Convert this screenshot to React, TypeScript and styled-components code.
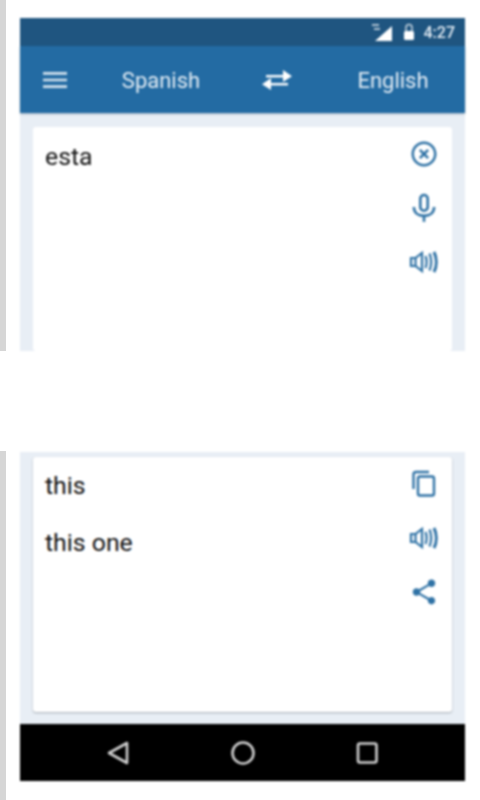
import React from 'react';
import styled, { createGlobalStyle } from 'styled-components';
import { MdMenu, MdHighlightOff, MdShare } from 'react-icons/md';

const GlobalStyle = createGlobalStyle`
  html, body {
    margin: 0;
    padding: 0;
    background: #fff;
    font-family: Roboto, "Liberation Sans", sans-serif;
  }
`;

function Speaker() {
  return (
    <svg width="30" height="24" viewBox="0 0 30 24" fill="none" stroke="currentColor" strokeWidth="2.2">
      <path d="M2 8h4.500v8H2z" />
      <path d="M6.500 8L13 3v18l-6.500-5" />
      <path d="M16.500 6c1.500 4 1.500 8 0 12" />
      <path d="M20.500 3.500c2 5 2 12 0 17" />
      <path d="M25 2c3 6 3 14 0 20" strokeWidth="3" />
    </svg>
  );
}

function MicIcon() {
  return (
    <svg width="24" height="30" viewBox="0 0 26 32" fill="none" stroke="currentColor" strokeWidth="2.800">
      <rect x="9" y="2" width="8" height="17" rx="4" />
      <path d="M2 15c0 6 4.500 9.500 11 9.500S24 21 24 15" />
      <path d="M13 24v7" />
    </svg>
  );
}

function CopyIcon() {
  return (
    <svg width="26" height="28" viewBox="0 0 26 28" fill="none" stroke="currentColor" strokeWidth="2.400">
      <path d="M2.500 19V4.500C2.500 3 3.500 2 5 2h13" />
      <rect x="7" y="6.500" width="16" height="19" rx="2" />
    </svg>
  );
}

function SwapArrows() {
  return (
    <svg width="32" height="24" viewBox="0 0 32 24" fill="currentColor">
      <path d="M5 7h18v2.400H5z" />
      <path d="M22 2l9 6.200L22 14z" />
      <path d="M9 15h18v2.400H9z" />
      <path d="M10 10L1 16.200 10 22z" />
    </svg>
  );
}

function SignalIcon() {
  return (
    <svg width="23" height="19" viewBox="0 0 23 19" fill="currentColor">
      <path d="M21 3v15H4z" />
      <path d="M1 1h7v2H1zM3 5h6v2H3z" opacity="0.65" />
    </svg>
  );
}

function LockIcon() {
  return (
    <svg width="12" height="18" viewBox="0 0 12 18" fill="none">
      <path d="M3 8V4.500a3 3 0 0 1 6 0V8" stroke="currentColor" strokeWidth="1.500" opacity="0.75" />
      <rect x="1" y="8" width="10" height="9" rx="1.500" fill="currentColor" />
    </svg>
  );
}

function BackIcon() {
  return (
    <svg width="22" height="24" viewBox="0 0 22 24" fill="none" stroke="currentColor" strokeWidth="2.600" strokeLinejoin="round">
      <path d="M20 2v20L2 12z" />
    </svg>
  );
}

function HomeIcon() {
  return (
    <svg width="26" height="24" viewBox="0 0 26 24" fill="none" stroke="currentColor" strokeWidth="2.600">
      <circle cx="13" cy="12" r="10.500" />
    </svg>
  );
}

function RecentsIcon() {
  return (
    <svg width="22" height="24" viewBox="0 0 22 24" fill="none" stroke="currentColor" strokeWidth="2.600">
      <rect x="2" y="2.500" width="18.500" height="19" rx="2" />
    </svg>
  );
}

export default function App() {
  return (
    <>
      <GlobalStyle />
      <Page>
        <Edge>
          <EdgeSegment $height={351} />
          <EdgeGap />
          <EdgeSegment $height={349} />
        </Edge>
        <Screen>
          <StatusBar>
            <SignalIcon />
            <LockIcon />
            <Clock>4:27</Clock>
          </StatusBar>
          <Toolbar>
            <MenuButton><MdMenu size={32} /></MenuButton>
            <Language>Spanish</Language>
            <SwapButton><SwapArrows /></SwapButton>
            <Language>English</Language>
          </Toolbar>
          <Panel $height={238} $top={14}>
            <Card $open>
              <Lines $top={16}>
                <Line>esta</Line>
              </Lines>
              <Actions>
                <IconSlot><MdHighlightOff size={36} /></IconSlot>
                <IconSlot><MicIcon /></IconSlot>
                <IconSlot><Speaker /></IconSlot>
              </Actions>
            </Card>
          </Panel>
          <Break />
          <Panel $height={272} $top={5}>
            <Card>
              <Lines $top={15}>
                <Line>this</Line>
                <Line>this one</Line>
              </Lines>
              <Actions>
                <IconSlot><CopyIcon /></IconSlot>
                <IconSlot><Speaker /></IconSlot>
                <IconSlot><MdShare size={30} /></IconSlot>
              </Actions>
            </Card>
          </Panel>
          <NavBar>
            <BackIcon />
            <HomeIcon />
            <RecentsIcon />
          </NavBar>
        </Screen>
      </Page>
    </>
  );
}

const Page = styled.div`
  display: flex;
  width: 480px;
  height: 800px;
  overflow: hidden;
  background: #fff;
`;

const Edge = styled.div`
  display: flex;
  flex-direction: column;
  width: 6px;
  flex-shrink: 0;
`;

const EdgeSegment = styled.div<{ $height: number }>`
  height: ${p => p.$height}px;
  background: #d6d6d6;
`;

const EdgeGap = styled.div`
  height: 100px;
`;

const Screen = styled.div`
  display: flex;
  flex-direction: column;
  width: 445px;
  margin-left: 14px;
  padding-top: 18px;
  filter: blur(0.8px);
`;

const StatusBar = styled.div`
  display: flex;
  align-items: center;
  justify-content: flex-end;
  gap: 9px;
  height: 28px;
  padding-right: 10px;
  background: #1f5580;
  color: #fff;
`;

const Clock = styled.span`
  font-size: 16px;
  font-weight: 500;
  color: #e6eef5;
`;

const Toolbar = styled.div`
  display: flex;
  align-items: center;
  height: 67px;
  background: #236ba3;
  color: #e4edf5;
  box-shadow: 0 1px 2px rgba(30, 60, 90, 0.35);
  position: relative;
`;

const MenuButton = styled.div`
  display: flex;
  justify-content: center;
  width: 70px;
  color: #d4e3ee;
`;

const Language = styled.div`
  width: 142px;
  padding-top: 2px;
  font-size: 22px;
  text-align: center;
`;

const SwapButton = styled.div`
  display: flex;
  justify-content: center;
  width: 90px;
  color: #fff;
`;

const Panel = styled.div<{ $height: number; $top: number }>`
  height: ${p => p.$height}px;
  padding: ${p => p.$top}px 13px 0;
  background: #e8eef5;
  box-sizing: border-box;
  display: flex;
  flex-direction: column;
`;

const Card = styled.div<{ $open?: boolean }>`
  display: flex;
  justify-content: space-between;
  flex: 1;
  margin-bottom: ${p => (p.$open ? 0 : 12)}px;
  padding: 0 13px 0 12px;
  background: #fff;
  border-radius: 3px;
  box-shadow: ${p => (p.$open ? 'none' : '0 1px 2px rgba(60, 70, 80, 0.4)')};
`;

const Lines = styled.div<{ $top: number }>`
  display: flex;
  flex-direction: column;
  gap: 29px;
  padding-top: ${p => p.$top}px;
`;

const Line = styled.div`
  font-size: 24.800px;
  line-height: 28px;
  color: #111;
`;

const Actions = styled.div`
  display: flex;
  flex-direction: column;
  width: 30px;
`;

const IconSlot = styled.div`
  display: flex;
  align-items: center;
  justify-content: center;
  height: 54px;
  color: #2f72a5;
`;

const Break = styled.div`
  height: 101px;
  background: #fff;
`;

const NavBar = styled.div`
  display: flex;
  align-items: center;
  justify-content: space-between;
  height: 57px;
  padding: 0 87px;
  background: #000;
  color: #d0d0d0;
`;
